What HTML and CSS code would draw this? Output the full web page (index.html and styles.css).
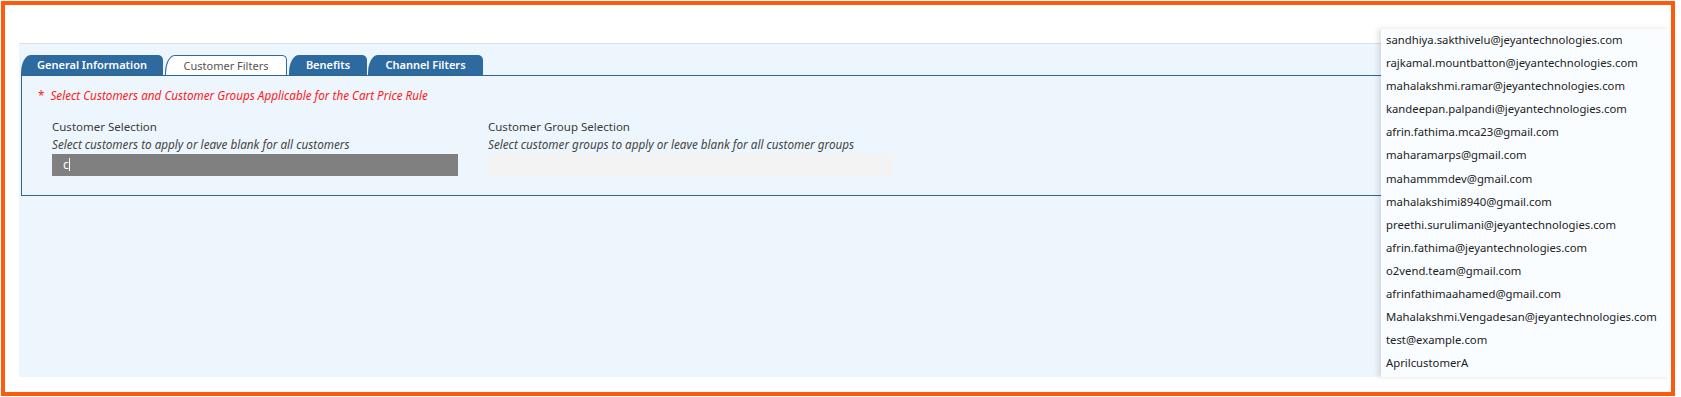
FILE: index.html
```html
<!DOCTYPE html>
<html>
<head>
<meta charset="utf-8">
<link rel="stylesheet" href="styles.css">
</head>
<body>
<div class="frame">
  <div class="panel">
    <div class="tabs">
      <div class="tab tab-general">General Information</div>
      <div class="tab tab-active tab-customer">Customer Filters</div>
      <div class="tab tab-benefits">Benefits</div>
      <div class="tab tab-channel">Channel Filters</div>
    </div>
    <div class="content">
      <div class="note"><span class="star">*</span>Select Customers and Customer Groups Applicable for the Cart Price Rule</div>
      <div class="fields">
        <div class="field">
          <div class="label">Customer Selection</div>
          <div class="hint">Select customers to apply or leave blank for all customers</div>
          <div class="input input-dark"><span class="typed">c</span></div>
        </div>
        <div class="field">
          <div class="label">Customer Group Selection</div>
          <div class="hint">Select customer groups to apply or leave blank for all customer groups</div>
          <div class="input input-light"></div>
        </div>
      </div>
    </div>
  </div>
  <ul class="dropdown">
    <li>sandhiya.sakthivelu@jeyantechnologies.com</li>
    <li>rajkamal.mountbatton@jeyantechnologies.com</li>
    <li>mahalakshmi.ramar@jeyantechnologies.com</li>
    <li>kandeepan.palpandi@jeyantechnologies.com</li>
    <li>afrin.fathima.mca23@gmail.com</li>
    <li>maharamarps@gmail.com</li>
    <li>mahammmdev@gmail.com</li>
    <li>mahalakshimi8940@gmail.com</li>
    <li>preethi.surulimani@jeyantechnologies.com</li>
    <li>afrin.fathima@jeyantechnologies.com</li>
    <li>o2vend.team@gmail.com</li>
    <li>afrinfathimaahamed@gmail.com</li>
    <li>Mahalakshmi.Vengadesan@jeyantechnologies.com</li>
    <li>test@example.com</li>
    <li>AprilcustomerA</li>
  </ul>
</div>
</body>
</html>
```
FILE: styles.css
```css
html, body {
  margin: 0;
  padding: 0;
  background: #ffffff;
}
body {
  font-family: "Noto Sans", "Open Sans", sans-serif;
  font-size: 12px;
  color: #333333;
}
.frame {
  position: relative;
  margin: 1px 6px 1px 1px;
  border: 4px solid #fd5a0c;
  padding: 38px 14px 15px 14px;
  box-sizing: border-box;
  height: 395px;
}
.panel {
  height: 334px;
  background: #eef6fd;
  border-top: 1px solid #dcdfe3;
  padding: 11px 16px 0 2px;
  box-sizing: border-box;
}
.tabs {
  display: flex;
  gap: 2px;
  height: 20px;
}
.tab {
  height: 20px;
  line-height: 20px;
  box-sizing: border-box;
  text-align: center;
  background: #2c6aa0;
  color: #ffffff;
  font-weight: 600;
  font-size: 11px;
  border-top-left-radius: 10px 18px;
  border-top-right-radius: 5px;
  white-space: nowrap;
}
.tab-general { width: 142px; }
.tab-customer { width: 122px; }
.tab-benefits { width: 78px; }
.tab-channel { width: 115px; margin-left: -1px; }
.tab-active {
  background: #ffffff;
  color: #555555;
  font-weight: 400;
  border: 1px solid #2c6aa0;
  border-bottom: none;
  line-height: 19px;
}
.content {
  border: 1px solid #2e6599;
  height: 121px;
  box-sizing: border-box;
  padding: 11px 16px 0 16px;
}
.note {
  color: #ff1a1a;
  font-style: italic;
  font-size: 11.7px;
  line-height: 16px;
}
.star {
  font-style: normal;
  margin-right: 6px;
}
.fields {
  display: flex;
  gap: 30px;
  margin-top: 16px;
  padding-left: 14px;
}
.field {
  width: 406px;
}
.label {
  color: #3a3a3a;
  font-size: 11.5px;
  line-height: 16px;
}
.hint {
  color: #444444;
  font-style: italic;
  font-size: 11.7px;
  line-height: 18px;
}
.input {
  height: 22px;
  margin-top: 1px;
}
.input-dark {
  background: #808080;
  padding-left: 11px;
  line-height: 22px;
  color: #ffffff;
  font-size: 12px;
}
.typed {
  border-right: 1px solid #ffffff;
  line-height: 13px;
  display: inline-block;
}
.input-light {
  background: #f3f3f3;
  width: 405px;
}
.dropdown {
  position: absolute;
  left: 1376px;
  top: 24px;
  width: 290px;
  height: 348px;
  margin: 0;
  padding: 0;
  box-sizing: border-box;
  list-style: none;
  background: #fafdff;
  box-shadow: -3px 0 5px rgba(0, 0, 0, 0.12);
}
.dropdown li {
  height: 23.1px;
  line-height: 22px;
  padding-left: 5px;
  font-size: 11.3px;
  color: #222222;
  white-space: nowrap;
}
```
